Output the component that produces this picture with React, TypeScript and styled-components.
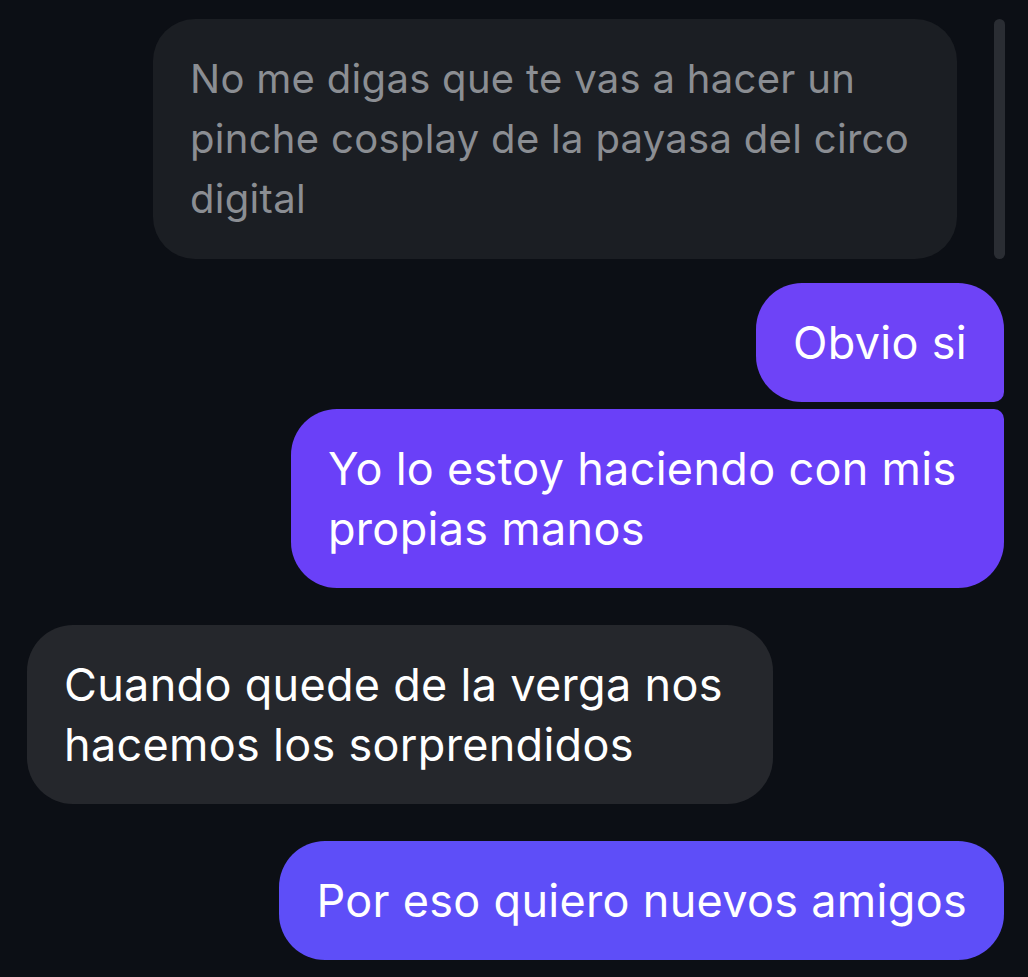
import React from "react";
import styled, { createGlobalStyle } from "styled-components";

const GlobalStyle = createGlobalStyle`
  html, body {
    margin: 0;
    padding: 0;
    background: #0c0f15;
  }
  body {
    font-family: Inter, "Liberation Sans", sans-serif;
    -webkit-font-smoothing: antialiased;
  }
`;

const Screen = styled.div`
  position: relative;
  width: 1028px;
  height: 977px;
  overflow: hidden;
  background: #0c0f15;
  padding: 19px 24px 0 27px;
  box-sizing: border-box;
  display: flex;
  flex-direction: column;
`;

const Scrollbar = styled.div`
  position: absolute;
  top: 19px;
  right: 23px;
  width: 11px;
  height: 240px;
  border-radius: 6px;
  background: #2a2d33;
`;

const Row = styled.div<{ $mine?: boolean; $gap: number; $indent?: number }>`
  display: flex;
  justify-content: ${(p) => (p.$mine ? "flex-end" : "flex-start")};
  margin-top: ${(p) => p.$gap}px;
  padding-left: ${(p) => p.$indent ?? 0}px;
`;

type Corner = "tr" | "br" | "none";

const Bubble = styled.div<{
  $bg: string;
  $color?: string;
  $corner?: Corner;
  $width?: number;
}>`
  box-sizing: border-box;
  ${(p) => (p.$width ? `width: ${p.$width}px;` : "")}
  padding: 30px 37px 29px;
  background: ${(p) => p.$bg};
  color: ${(p) => p.$color ?? "#ffffff"};
  font-size: 45px;
  line-height: 60px;
  letter-spacing: 0.3px;
  white-space: nowrap;
  border-radius: ${(p) =>
    p.$corner === "br"
      ? "46px 46px 10px 46px"
      : p.$corner === "tr"
      ? "46px 10px 46px 46px"
      : "46px"};
`;

const Faded = styled(Bubble)`
  padding: 30px 37px;
  font-size: 40px;
  border-radius: 42px;
`;

export default function App() {
  return (
    <>
      <GlobalStyle />
      <Screen>
        <Scrollbar />
        <Row $gap={0} $indent={126}>
          <Faded $bg="#1b1e23" $color="#8b8e93" $width={804}>
            No me digas que te vas a hacer un
            <br />
            pinche cosplay de la payasa del circo
            <br />
            digital
          </Faded>
        </Row>
        <Row $mine $gap={24}>
          <Bubble $bg="#6e43f7" $corner="br">
            Obvio si
          </Bubble>
        </Row>
        <Row $mine $gap={7}>
          <Bubble $bg="#6a40f8" $corner="tr" $width={713}>
            Yo lo estoy haciendo con mis
            <br />
            propias manos
          </Bubble>
        </Row>
        <Row $gap={37}>
          <Bubble $bg="#25272c" $width={746}>
            Cuando quede de la verga nos
            <br />
            hacemos los sorprendidos
          </Bubble>
        </Row>
        <Row $mine $gap={37}>
          <Bubble $bg="#5e4ef8">Por eso quiero nuevos amigos</Bubble>
        </Row>
      </Screen>
    </>
  );
}
